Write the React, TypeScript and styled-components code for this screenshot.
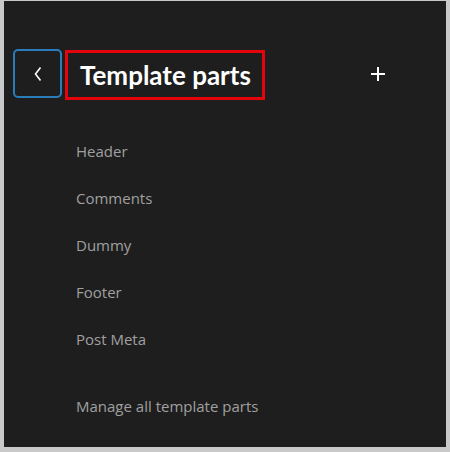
import React from 'react';
import styled, { createGlobalStyle } from 'styled-components';

const GlobalStyle = createGlobalStyle`
  html, body {
    margin: 0;
    padding: 0;
    background: #c9c9c9;
  }
  body {
    font-family: "Open Sans", "Noto Sans", sans-serif;
  }
`;

const Frame = styled.div`
  width: 450px;
  height: 452px;
  padding: 1px 4px 5px 4px;
  box-sizing: border-box;
`;

const Panel = styled.div`
  width: 442px;
  height: 446px;
  background: #1e1e1e;
  box-sizing: border-box;
  padding-top: 48px;
  display: flex;
  flex-direction: column;
`;

const HeaderRow = styled.div`
  display: flex;
  align-items: flex-start;
  padding-left: 9px;
`;

const BackButton = styled.button`
  width: 49px;
  height: 49px;
  box-sizing: border-box;
  border: 2px solid #2b7cbb;
  border-radius: 5px;
  background: transparent;
  display: flex;
  align-items: center;
  justify-content: center;
  padding: 0;
  cursor: pointer;
`;

const TitleBox = styled.div`
  width: 200px;
  height: 50px;
  box-sizing: border-box;
  margin-left: 3px;
  margin-top: 1px;
  border: 3px solid #e3050b;
  display: flex;
  align-items: center;
  padding-left: 12px;
`;

const Title = styled.h1`
  margin: 0;
  color: #ffffff;
  font-family: "Lato", "Open Sans", sans-serif;
  font-size: 26px;
  font-weight: 700;
  line-height: 30px;
  white-space: nowrap;
`;

const AddButton = styled.button`
  margin-left: 101px;
  margin-top: 13px;
  width: 24px;
  height: 24px;
  background: transparent;
  border: none;
  padding: 0;
  display: flex;
  align-items: center;
  justify-content: center;
  cursor: pointer;
`;

const List = styled.ul`
  list-style: none;
  margin: 40px 0 0 0;
  padding: 0 0 0 72px;
  display: flex;
  flex-direction: column;
  gap: 25px;
`;

const Item = styled.li<{ $spaced?: boolean }>`
  color: #a0a0a0;
  font-size: 15px;
  line-height: 22px;
  margin-top: ${(p) => (p.$spaced ? '20px' : '0')};
`;

const parts = ['Header', 'Comments', 'Dummy', 'Footer', 'Post Meta'];

const App: React.FC = () => {
  return (
    <Frame>
      <GlobalStyle />
      <Panel>
        <HeaderRow>
          <BackButton aria-label="Back">
            <svg width="10" height="16" viewBox="0 0 10 16">
              <path d="M7.5 1.5 L2.5 8 L7.5 14.5" fill="none" stroke="#ffffff" strokeWidth="1.6" />
            </svg>
          </BackButton>
          <TitleBox>
            <Title>Template parts</Title>
          </TitleBox>
          <AddButton aria-label="Add">
            <svg width="16" height="16" viewBox="0 0 16 16">
              <path d="M8 1 V15 M1 8 H15" stroke="#ffffff" strokeWidth="2" />
            </svg>
          </AddButton>
        </HeaderRow>
        <List>
          {parts.map((p) => (
            <Item key={p}>{p}</Item>
          ))}
          <Item $spaced>Manage all template parts</Item>
        </List>
      </Panel>
    </Frame>
  );
};

export default App;
